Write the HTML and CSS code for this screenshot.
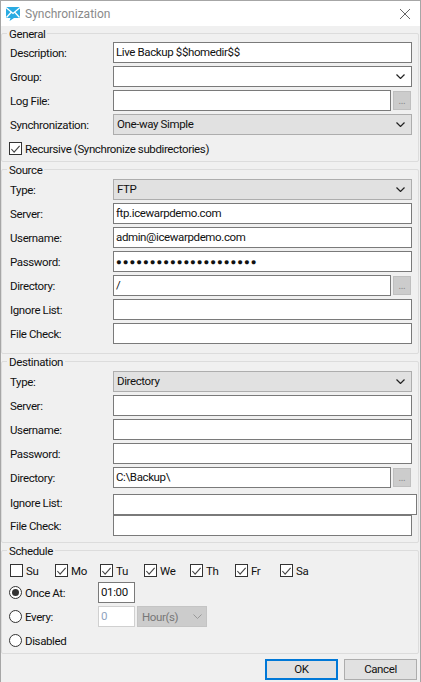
FILE: index.html
```html
<!DOCTYPE html>
<html lang="en">
<head>
<meta charset="utf-8">
<title>Synchronization</title>
<link rel="stylesheet" href="styles.css">
</head>
<body>
<div class="window">
  <header class="titlebar">
    <svg class="app-icon" width="16" height="16" viewBox="0 0 16 16"><path d="M1 1 L15 1 L15 12 L9 12 L4.5 15 L5.5 12 L1 12 Z" fill="#29abe2"/><path d="M1 1.5 L8 7.5 L15 1.5 M1.5 11.5 L6 6.5 M14.5 11.5 L10 6.5" fill="none" stroke="#fff" stroke-width="1.3"/></svg>
    <span class="title">Synchronization</span>
    <svg class="close" width="12" height="12" viewBox="0 0 12 12"><path d="M1 1 L11 11 M11 1 L1 11" stroke="#666" stroke-width="1" fill="none"/></svg>
  </header>
  <main class="body">
    <fieldset class="group group-general">
      <legend>General</legend>
      <div class="row"><label>Description:</label><div class="input">Live Backup $$homedir$$</div></div>
      <div class="row"><label>Group:</label><div class="input select"><svg class="chev" width="9" height="5" viewBox="0 0 9 5"><path d="M0.5 0.5 L4.5 4.5 L8.5 0.5" fill="none" stroke="#222" stroke-width="1.2"/></svg></div></div>
      <div class="row"><label>Log File:</label><div class="input short"></div><div class="browse">...</div></div>
      <div class="row"><label>Synchronization:</label><div class="input select combo">One-way Simple<svg class="chev" width="9" height="5" viewBox="0 0 9 5"><path d="M0.5 0.5 L4.5 4.5 L8.5 0.5" fill="none" stroke="#222" stroke-width="1.2"/></svg></div></div>
      <div class="check-row"><span class="check on"><svg width="12" height="12" viewBox="0 0 12 12"><path d="M1.5 6 L4.5 9.5 L10.5 2.5" fill="none" stroke="#444" stroke-width="1.2"/></svg></span><span>Recursive (Synchronize subdirectories)</span></div>
    </fieldset>
    <fieldset class="group group-source">
      <legend>Source</legend>
      <div class="row"><label>Type:</label><div class="input select combo">FTP<svg class="chev" width="9" height="5" viewBox="0 0 9 5"><path d="M0.5 0.5 L4.5 4.5 L8.5 0.5" fill="none" stroke="#222" stroke-width="1.2"/></svg></div></div>
      <div class="row"><label>Server:</label><div class="input">ftp.icewarpdemo.com</div></div>
      <div class="row"><label>Username:</label><div class="input">admin@icewarpdemo.com</div></div>
      <div class="row"><label>Password:</label><div class="input dots">●●●●●●●●●●●●●●●●●●●●●</div></div>
      <div class="row"><label>Directory:</label><div class="input short">/</div><div class="browse">...</div></div>
      <div class="row"><label>Ignore List:</label><div class="input"></div></div>
      <div class="row"><label>File Check:</label><div class="input"></div></div>
    </fieldset>
    <fieldset class="group group-dest">
      <legend>Destination</legend>
      <div class="row"><label>Type:</label><div class="input select combo">Directory<svg class="chev" width="9" height="5" viewBox="0 0 9 5"><path d="M0.5 0.5 L4.5 4.5 L8.5 0.5" fill="none" stroke="#222" stroke-width="1.2"/></svg></div></div>
      <div class="row"><label>Server:</label><div class="input"></div></div>
      <div class="row"><label>Username:</label><div class="input"></div></div>
      <div class="row"><label>Password:</label><div class="input"></div></div>
      <div class="row"><label>Directory:</label><div class="input short">C:\Backup\</div><div class="browse">...</div></div>
      <div class="row row-tall"><label>Ignore List:</label><div class="input wide"></div></div>
      <div class="row row-tight"><label>File Check:</label><div class="input"></div></div>
    </fieldset>
    <fieldset class="group group-schedule">
      <legend>Schedule</legend>
      <div class="days">
        <div class="day"><span class="check"></span><span>Su</span></div>
        <div class="day"><span class="check on"><svg width="12" height="12" viewBox="0 0 12 12"><path d="M1.5 6 L4.5 9.5 L10.5 2.5" fill="none" stroke="#444" stroke-width="1.2"/></svg></span><span>Mo</span></div>
        <div class="day"><span class="check on"><svg width="12" height="12" viewBox="0 0 12 12"><path d="M1.5 6 L4.5 9.5 L10.5 2.5" fill="none" stroke="#444" stroke-width="1.2"/></svg></span><span>Tu</span></div>
        <div class="day"><span class="check on"><svg width="12" height="12" viewBox="0 0 12 12"><path d="M1.5 6 L4.5 9.5 L10.5 2.5" fill="none" stroke="#444" stroke-width="1.2"/></svg></span><span>We</span></div>
        <div class="day"><span class="check on"><svg width="12" height="12" viewBox="0 0 12 12"><path d="M1.5 6 L4.5 9.5 L10.5 2.5" fill="none" stroke="#444" stroke-width="1.2"/></svg></span><span>Th</span></div>
        <div class="day"><span class="check on"><svg width="12" height="12" viewBox="0 0 12 12"><path d="M1.5 6 L4.5 9.5 L10.5 2.5" fill="none" stroke="#444" stroke-width="1.2"/></svg></span><span>Fr</span></div>
        <div class="day"><span class="check on"><svg width="12" height="12" viewBox="0 0 12 12"><path d="M1.5 6 L4.5 9.5 L10.5 2.5" fill="none" stroke="#444" stroke-width="1.2"/></svg></span><span>Sa</span></div>
      </div>
      <div class="sched-row"><span class="radio on"></span><span class="sched-label">Once At:</span><div class="time">01:00</div></div>
      <div class="sched-row"><span class="radio"></span><span class="sched-label">Every:</span><div class="count">0</div><div class="unit">Hour(s)<svg class="chev" width="9" height="5" viewBox="0 0 9 5"><path d="M0.5 0.5 L4.5 4.5 L8.5 0.5" fill="none" stroke="#999"/></svg></div></div>
      <div class="sched-row"><span class="radio"></span><span class="sched-label">Disabled</span></div>
    </fieldset>
    <footer class="buttons">
      <div class="btn btn-default">OK</div>
      <div class="btn">Cancel</div>
    </footer>
  </main>
</div>
</body>
</html>
```
FILE: styles.css
```css
* { box-sizing: border-box; }
html, body { margin: 0; padding: 0; }
body {
  width: 421px;
  height: 682px;
  overflow: hidden;
  font-family: Roboto, "Open Sans", sans-serif;
  font-size: 11.5px;
  letter-spacing: -0.38px;
  color: #111;
}
.window {
  width: 421px;
  height: 682px;
  border: 1px solid #a6a6a6;
  border-bottom: 0;
  background: #f0f0f0;
  display: flex;
  flex-direction: column;
}
.titlebar {
  height: 25px;
  background: #fff;
  display: flex;
  align-items: center;
  padding: 0 9px 0 4px;
  flex: none;
}
.app-icon { flex: none; }
.title { margin-left: 4px; color: #8a8a8a; font-size: 12px; letter-spacing: 0; flex: 1; }
.body { flex: 1; display: flex; flex-direction: column; }
.group {
  margin: 0 1px 0 0;
  padding: 0;
  border: 1px solid #dcdcdc;
  border-radius: 2px;
  min-width: 0;
}
.group legend {
  margin-left: 5px;
  padding: 0 2px;
  line-height: 16px;
  height: 14px;
}
.group-general { padding-top: 2px; height: 136px; }
.group-source { height: 192px; }
.group-dest { height: 189px; }
.group-schedule { height: 111px; }
.row {
  display: flex;
  align-items: center;
  height: 21px;
  margin-bottom: 3px;
  padding-left: 8px;
}
.group-source .row:first-of-type, .group-dest .row:first-of-type { margin-top: 3px; }
.row label { width: 103px; flex: none; padding-top: 1px; }
.input {
  width: 299px;
  height: 21px;
  background: #fff;
  border: 1px solid #7a7a7a;
  padding: 0 2px;
  line-height: 19px;
  white-space: nowrap;
  overflow: hidden;
}
.input.short { width: 278px; }
.input.wide { width: 304px; }
.row-tall { margin-top: 6px; margin-bottom: 0; }
.row-tall label { padding-top: 0; padding-bottom: 3px; }
.row-tight { margin-bottom: 0; }
.dots { font-size: 9.5px; letter-spacing: 1px; }
.select { display: flex; align-items: center; padding-left: 3px; }
.combo { background: #e1e1e1; border-color: #adadad; }
.chev { margin-left: auto; margin-right: 4px; flex: none; }
.browse {
  width: 18px;
  height: 19px;
  margin-left: 2px;
  background: #ccc;
  border: 1px solid #bfbfbf;
  color: #888;
  font-size: 10px;
  line-height: 17px;
  text-align: center;
  flex: none;
}
.check-row {
  display: flex;
  align-items: center;
  gap: 3px;
  padding-left: 7px;
  height: 21px;
}
.check {
  display: inline-flex;
  width: 13px;
  height: 13px;
  border: 1px solid #333;
  background: #fff;
  flex: none;
  align-items: center;
  justify-content: center;
}
.days { display: flex; padding: 2px 0 0 8px; height: 25px; align-items: center; }
.day { display: flex; align-items: center; gap: 3px; width: 45px; flex: none; }
.day:nth-child(3) { width: 44px; }
.day:nth-child(4) { width: 46px; }
.sched-row {
  display: flex;
  align-items: center;
  height: 21px;
  margin-bottom: 3px;
  padding-left: 7px;
}
.radio {
  width: 13px;
  height: 13px;
  border: 1px solid #333;
  border-radius: 50%;
  background: #fff;
  flex: none;
  position: relative;
}
.radio.on::after {
  content: "";
  position: absolute;
  left: 2px;
  top: 2px;
  width: 7px;
  height: 7px;
  border-radius: 50%;
  background: #333;
}
.sched-label { width: 73px; margin-left: 3px; flex: none; }
.time, .count {
  width: 37px;
  height: 21px;
  background: #fff;
  padding: 0 2px;
  line-height: 19px;
  flex: none;
}
.time { border: 1px solid #7a7a7a; }
.count { border: 1px solid #d0d0d0; color: #8fa3c0; }
.unit {
  width: 70px;
  height: 21px;
  margin-left: 2px;
  background: #ccc;
  border: 1px solid #c4c4c4;
  color: #777;
  display: flex;
  align-items: center;
  padding-left: 4px;
}
.buttons {
  display: flex;
  justify-content: flex-end;
  gap: 6px;
  padding: 5px 3px 0 0;
}
.btn {
  width: 73px;
  height: 21px;
  background: #e1e1e1;
  border: 1px solid #adadad;
  text-align: center;
  line-height: 19px;
}
.btn-default { border: 2px solid #0078d7; line-height: 17px; }
```
